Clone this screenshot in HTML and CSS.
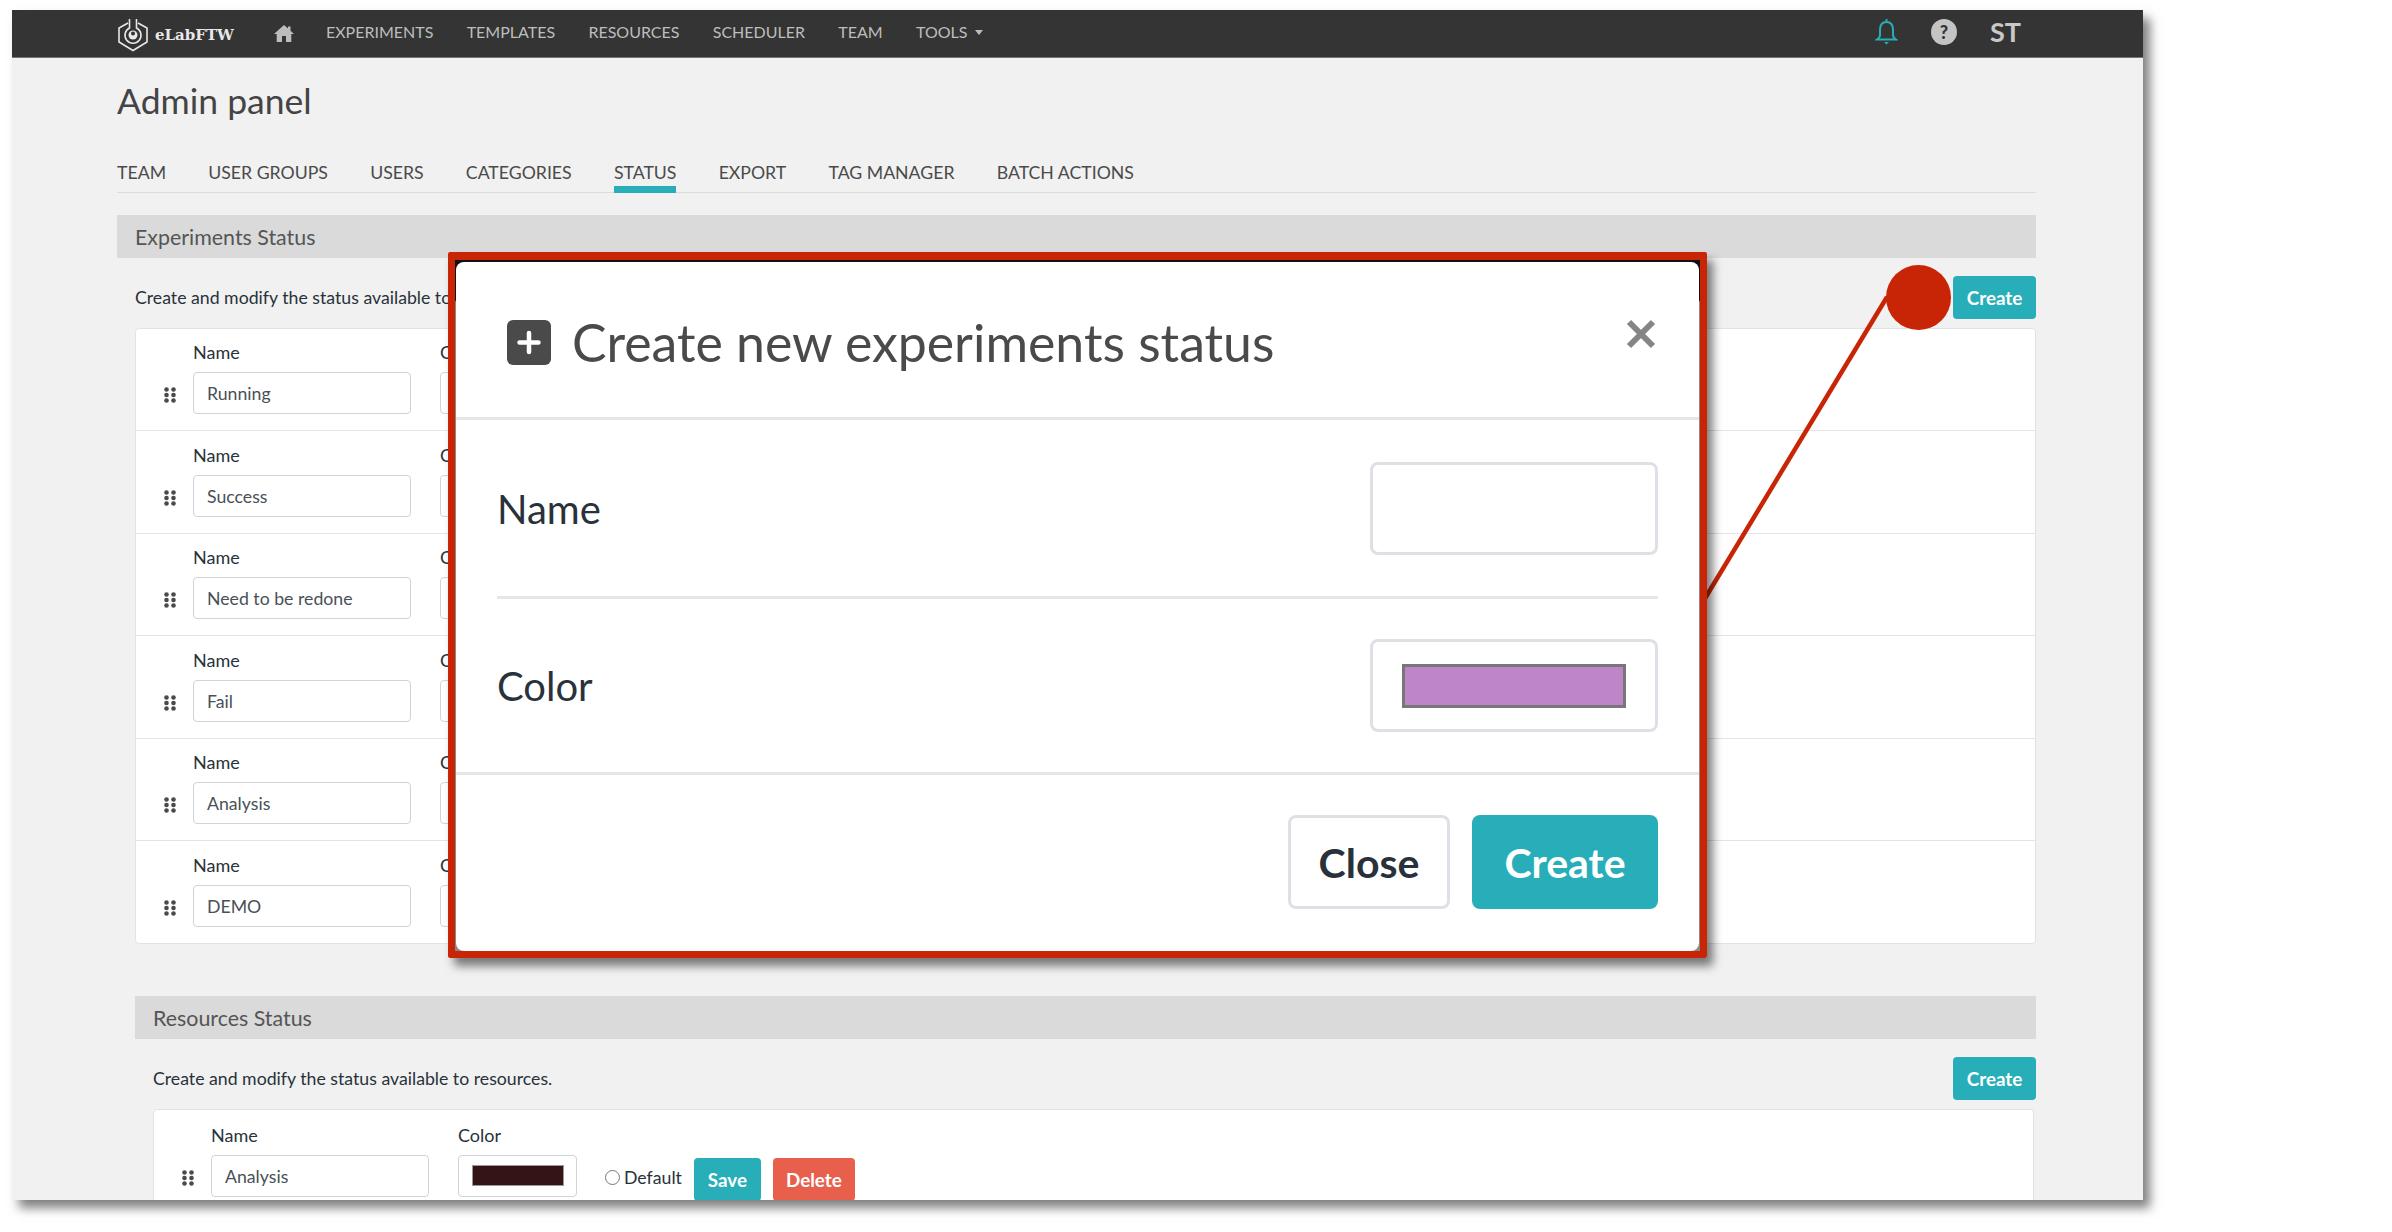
FILE: index.html
```html
<!DOCTYPE html>
<html lang="en">
<head>
    <meta charset="UTF-8">
    <title>Admin panel - eLabFTW</title>
    <link rel="stylesheet" href="styles.css">
</head>
<body>

    <div class="window">
        <nav class="navbar">
            <a class="brand">
                <svg class="brand-logo" viewBox="0 0 32 34" fill="none" stroke="#e8e8e8" stroke-width="1.6">
                    <path d="M11 5 L2 10 V24 L16 32.5 L30 24 V10 L21 5"/>
                    <path d="M12.5 1 V10 A8 8 0 1 0 19.5 10 V1"/>
                    <circle cx="16" cy="17" r="4.5" fill="#e8e8e8" stroke="none"/>
                    <circle cx="16" cy="15.5" r="2" fill="#333" stroke="none"/>
                </svg>
                <span class="brand-name">eLabFTW</span>
            </a>
            <svg class="home-icon" viewBox="0 0 20 17"><path fill="#bdbdbd" d="M10 0 L14 3.6 V1.5 H16.5 V5.8 L20 9 H17.3 V17 H12 V11 H8 V17 H2.7 V9 H0 Z"/></svg>
            <a class="nav-link">Experiments</a>
            <a class="nav-link">Templates</a>
            <a class="nav-link">Resources</a>
            <a class="nav-link">Scheduler</a>
            <a class="nav-link">Team</a>
            <a class="nav-link">Tools <span class="caret"></span></a>
            <div class="nav-right">
                <svg class="bell-icon" viewBox="0 0 23 26" fill="none" stroke="#27aeb9" stroke-width="2"><path d="M11.5 3 C6.5 3 5 7 5 11 V16 C5 18 3.5 19.5 2 20.5 H21 C19.5 19.5 18 18 18 16 V11 C18 7 16.5 3 11.5 3 Z"/><path d="M11.5 0 V3"/><path d="M9 23 H14 L11.5 25.5 Z" fill="#27aeb9" stroke="none"/></svg>
                <span class="help-icon">?</span>
                <span class="user-initials">ST</span>
            </div>
        </nav>

        <main class="content">
            <h1 class="page-title">Admin panel</h1>

            <div class="tabs">
                <a class="tab">Team</a>
                <a class="tab">User groups</a>
                <a class="tab">Users</a>
                <a class="tab">Categories</a>
                <a class="tab active">Status</a>
                <a class="tab">Export</a>
                <a class="tab">Tag manager</a>
                <a class="tab">Batch actions</a>
            </div>

            <section>
                <h2 class="section-title">Experiments Status</h2>
                <div class="section-body">
                    <div class="desc-row">
                        <p>Create and modify the status available to experiments.</p>
                        <button class="btn btn-create">Create</button>
                    </div>
                    <ul class="status-list">
                        <li class="status-row">
                            <svg class="grip" viewBox="0 0 12 16"><use href="#grip-dots"/></svg>
                            <div class="field"><label>Name</label><div class="input name-input">Running</div></div>
                            <div class="field"><label>Color</label><div class="input color-input"><span class="swatch swatch-green"></span></div></div>
                        </li>
                        <li class="status-row">
                            <svg class="grip" viewBox="0 0 12 16"><use href="#grip-dots"/></svg>
                            <div class="field"><label>Name</label><div class="input name-input">Success</div></div>
                            <div class="field"><label>Color</label><div class="input color-input"><span class="swatch swatch-green"></span></div></div>
                        </li>
                        <li class="status-row">
                            <svg class="grip" viewBox="0 0 12 16"><use href="#grip-dots"/></svg>
                            <div class="field"><label>Name</label><div class="input name-input">Need to be redone</div></div>
                            <div class="field"><label>Color</label><div class="input color-input"><span class="swatch swatch-green"></span></div></div>
                        </li>
                        <li class="status-row">
                            <svg class="grip" viewBox="0 0 12 16"><use href="#grip-dots"/></svg>
                            <div class="field"><label>Name</label><div class="input name-input">Fail</div></div>
                            <div class="field"><label>Color</label><div class="input color-input"><span class="swatch swatch-green"></span></div></div>
                        </li>
                        <li class="status-row">
                            <svg class="grip" viewBox="0 0 12 16"><use href="#grip-dots"/></svg>
                            <div class="field"><label>Name</label><div class="input name-input">Analysis</div></div>
                            <div class="field"><label>Color</label><div class="input color-input"><span class="swatch swatch-green"></span></div></div>
                        </li>
                        <li class="status-row">
                            <svg class="grip" viewBox="0 0 12 16"><use href="#grip-dots"/></svg>
                            <div class="field"><label>Name</label><div class="input name-input">DEMO</div></div>
                            <div class="field"><label>Color</label><div class="input color-input"><span class="swatch swatch-green"></span></div></div>
                        </li>
                    </ul>
                </div>
            </section>

            <section class="section-nested">
                <h2 class="section-title">Resources Status</h2>
                <div class="section-body">
                    <div class="desc-row">
                        <p>Create and modify the status available to resources.</p>
                        <button class="btn btn-create">Create</button>
                    </div>
                    <ul class="status-list">
                        <li class="status-row">
                            <svg class="grip" viewBox="0 0 12 16"><use href="#grip-dots"/></svg>
                            <div class="field"><label>Name</label><div class="input name-input">Analysis</div></div>
                            <div class="field"><label>Color</label><div class="input color-input"><span class="swatch swatch-dark"></span></div></div>
                            <span class="radio"></span>
                            <span class="default-label">Default</span>
                            <button class="btn btn-save">Save</button>
                            <button class="btn btn-delete">Delete</button>
                        </li>
                    </ul>
                </div>
            </section>
        </main>

        <!-- annotation over the page -->
        <svg class="callout-line" width="2131" height="1190">
            <line x1="1875" y1="287" x2="1692" y2="590" stroke="#c82506" stroke-width="4.5"/>
        </svg>
        <span class="callout-dot"></span>

        <div class="modal">
            <div class="modal-panel">
                <div class="modal-header">
                    <svg class="modal-icon" viewBox="0 0 44 45"><rect width="44" height="45" rx="6" fill="#4a4a4a"/><path d="M22 13 V32 M12.5 22.5 H31.5" stroke="#fff" stroke-width="4.5" stroke-linecap="round"/></svg>
                    <h3 class="modal-title">Create new experiments status</h3>
                    <svg class="modal-close" viewBox="0 0 30 30"><path d="M3 3 L27 27 M27 3 L3 27" stroke="#858585" stroke-width="6"/></svg>
                </div>
                <div class="modal-body">
                    <div class="modal-row modal-row-first">
                        <label>Name</label>
                        <div class="modal-input"></div>
                    </div>
                    <div class="modal-row modal-row-last">
                        <label>Color</label>
                        <div class="modal-input"><span class="modal-swatch"></span></div>
                    </div>
                </div>
                <div class="modal-footer">
                    <button class="btn modal-btn btn-close">Close</button>
                    <button class="btn modal-btn btn-submit">Create</button>
                </div>
            </div>
        </div>
    </div>

    <svg width="0" height="0" class="defs">
        <defs>
            <g id="grip-dots" fill="#4a4a4a">
                <circle cx="2.5" cy="2.5" r="2.3"/><circle cx="9.5" cy="2.5" r="2.3"/>
                <circle cx="2.5" cy="8" r="2.3"/><circle cx="9.5" cy="8" r="2.3"/>
                <circle cx="2.5" cy="13.5" r="2.3"/><circle cx="9.5" cy="13.5" r="2.3"/>
            </g>
        </defs>
    </svg>

</body>
</html>
```

FILE: styles.css
```css
* {
    box-sizing: border-box;
}

html, body {
    height: 100%;
}

body {
    margin: 0;
    background-color: #fff;
    font-family: Lato, "Open Sans", sans-serif;
    font-size: 17.7px;
    color: #29323a;
    overflow: hidden;
}

.defs {
    position: absolute;
}

.window {
    position: relative;
    width: 2131px;
    height: 1190px;
    margin: 10px 0 0 12px;
    background-color: #f1f1f1;
    box-shadow: 7px 8px 10px rgba(0, 0, 0, 0.5);
    overflow: visible;
}

/* top bar */
.navbar {
    display: flex;
    align-items: center;
    height: 48px;
    padding: 0 122px 0 105px;
    background-color: #343434;
    border-bottom: 1px solid #777;
    color: #bdbdbd;
}

.brand {
    display: flex;
    align-items: center;
    gap: 6px;
    margin-top: 2px;
}

.brand-logo {
    width: 32px;
    height: 34px;
}

.brand-name {
    font-family: "DejaVu Serif", serif;
    font-size: 15px;
    font-weight: bold;
    color: #e8e8e8;
}

.home-icon {
    width: 20px;
    height: 17px;
    margin: 0 32px 0 40px;
}

.nav-link {
    margin-right: 33.3px;
    font-size: 16px;
    text-transform: uppercase;
    margin-top: -5px;
}

.caret {
    display: inline-block;
    margin-left: 3px;
    vertical-align: 3px;
    border-top: 5px solid #bdbdbd;
    border-left: 4px solid transparent;
    border-right: 4px solid transparent;
}

.nav-right {
    display: flex;
    align-items: center;
    margin-left: auto;
    margin-top: -4px;
}

.bell-icon {
    width: 23px;
    height: 26px;
}

.help-icon {
    width: 26px;
    height: 26px;
    margin-left: 33px;
    border-radius: 50%;
    background-color: #c4c4c4;
    color: #343434;
    font-size: 18px;
    font-weight: 900;
    line-height: 26px;
    text-align: center;
}

.user-initials {
    margin-left: 33px;
    font-size: 27px;
    font-weight: 700;
    line-height: 30px;
    color: #c8c8c8;
}

/* page */
.content {
    padding: 0 107px 0 105px;
    height: 1142px;
    overflow: hidden;
}

.page-title {
    margin: 21px 0 0;
    font-size: 35.5px;
    font-weight: 400;
    line-height: 44px;
    color: #444;
}

.tabs {
    display: flex;
    gap: 42.2px;
    height: 31px;
    margin-top: 39px;
    border-bottom: 1px solid #dcdcdc;
}

.tab {
    height: 31px;
    font-size: 17.7px;
    line-height: 21px;
    text-transform: uppercase;
    color: #4a4a4a;
}

.tab.active {
    border-bottom: 7px solid #27aeb9;
}

.section-title {
    margin: 22px 0 0;
    padding-left: 18px;
    height: 43px;
    background-color: #dadada;
    font-size: 21.4px;
    font-weight: 400;
    line-height: 44px;
    color: #555;
}

.section-body {
    padding-left: 18px;
}

.section-nested {
    margin: 52px 0 0 18px;
}

.section-nested .section-title {
    margin-top: 0;
}

.desc-row {
    display: flex;
    align-items: center;
    justify-content: space-between;
    margin-top: 18px;
}

.desc-row p {
    margin: 0;
}

.btn {
    border: none;
    border-radius: 4px;
    font-family: Lato, sans-serif;
    font-size: 18.8px;
    font-weight: 700;
    color: #fff;
}

.btn-create {
    width: 83px;
    height: 43px;
    background-color: #27aeb9;
}

.status-list {
    margin: 9px 0 0;
    padding: 0;
    list-style: none;
    background-color: #fff;
    border: 1px solid #e2e2e2;
    border-radius: 4px;
}

.section-nested .status-list {
    margin-right: 2px;
}

.status-row {
    display: flex;
    align-items: flex-end;
    height: 102.4px;
    padding: 0 0 16px 28px;
    border-bottom: 1px solid #e2e5e8;
}

.status-row:last-child {
    border-bottom: none;
}

.grip {
    width: 12px;
    height: 16px;
    margin: 0 17px 11px 0;
}

.field {
    display: flex;
    flex-direction: column;
    gap: 10px;
    margin-right: 29px;
}

.field label {
    font-size: 18px;
    line-height: 20px;
}

.input {
    height: 42px;
    background-color: #fff;
    border: 1px solid #ced4da;
    border-radius: 4px;
}

.name-input {
    width: 218px;
    padding-left: 13px;
    line-height: 41px;
    color: #495057;
}

.color-input {
    display: flex;
    align-items: center;
    justify-content: center;
    width: 119px;
}

.swatch {
    width: 92px;
    height: 21px;
    border: 1px solid #999;
}

.swatch-dark {
    background-color: #341414;
}

.swatch-green {
    background-color: #54aa08;
}

.radio {
    width: 15px;
    height: 15px;
    margin: 0 4px 12px -1px;
    background-color: #fff;
    border: 1px solid #777;
    border-radius: 50%;
}

.default-label {
    margin: 0 12px 9px 0;
}

.btn-save,
.btn-delete {
    height: 43px;
    margin-bottom: -4px;
}

.btn-save {
    width: 67px;
    margin-right: 12px;
    background-color: #27aeb9;
}

.btn-delete {
    width: 82px;
    background-color: #e8604c;
}

/* annotation */
.callout-line {
    position: absolute;
    left: 0;
    top: 0;
    pointer-events: none;
}

.callout-dot {
    position: absolute;
    left: 1874px;
    top: 255px;
    width: 65px;
    height: 65px;
    border-radius: 50%;
    background-color: #c82506;
}

/* dialog */
.modal {
    position: absolute;
    left: 436px;
    top: 242px;
    width: 1259px;
    height: 706px;
    border: 7px solid #c82506;
    border-top-width: 8px;
    border-radius: 2px;
    background: linear-gradient(#111 0, #111 40px, #8a8a8a 42px);
    box-shadow: 6px 8px 10px rgba(0, 0, 0, 0.5);
}

.modal-panel {
    display: flex;
    flex-direction: column;
    height: calc(100% - 2px);
    margin: 2px 1px 0;
    background-color: #fff;
    border-radius: 8px;
}

.modal-header {
    display: flex;
    align-items: center;
    flex: none;
    height: 158px;
    padding: 0 43px 0 51px;
    border-bottom: 3px solid #e4e7ea;
}

.modal-icon {
    width: 44px;
    height: 45px;
    margin-top: 5px;
}

.modal-title {
    margin: 4px 0 0 21px;
    font-size: 51.8px;
    font-weight: 400;
    color: #4a4a4a;
}

.modal-close {
    width: 30px;
    height: 30px;
    margin: -12px 0 0 auto;
}

.modal-body {
    flex: none;
    padding: 0 41px 0 41px;
}

.modal-row {
    display: flex;
    align-items: center;
    justify-content: space-between;
    padding: 42px 0 41px;
}

.modal-row-first {
    border-bottom: 3px solid #e4e7ea;
}

.modal-row-last {
    padding: 40px 0 40px;
}

.modal-row label {
    font-size: 40px;
    color: #29323a;
}

.modal-input {
    display: flex;
    align-items: center;
    justify-content: center;
    width: 288px;
    height: 93px;
    border: 3px solid #dde1e6;
    border-radius: 8px;
}

.modal-swatch {
    width: 224px;
    height: 44px;
    background-color: #be86c9;
    border: 3px solid #777;
}

.modal-footer {
    display: flex;
    justify-content: flex-end;
    gap: 22px;
    flex: none;
    padding: 40px 41px 0 0;
    border-top: 3px solid #e4e7ea;
}

.modal-btn {
    height: 94px;
    border-radius: 8px;
    font-size: 41px;
}

.btn-close {
    width: 162px;
    background-color: #fff;
    border: 3px solid #dde1e6;
    color: #29323a;
}

.btn-submit {
    width: 186px;
    background-color: #27aeb9;
}
```
